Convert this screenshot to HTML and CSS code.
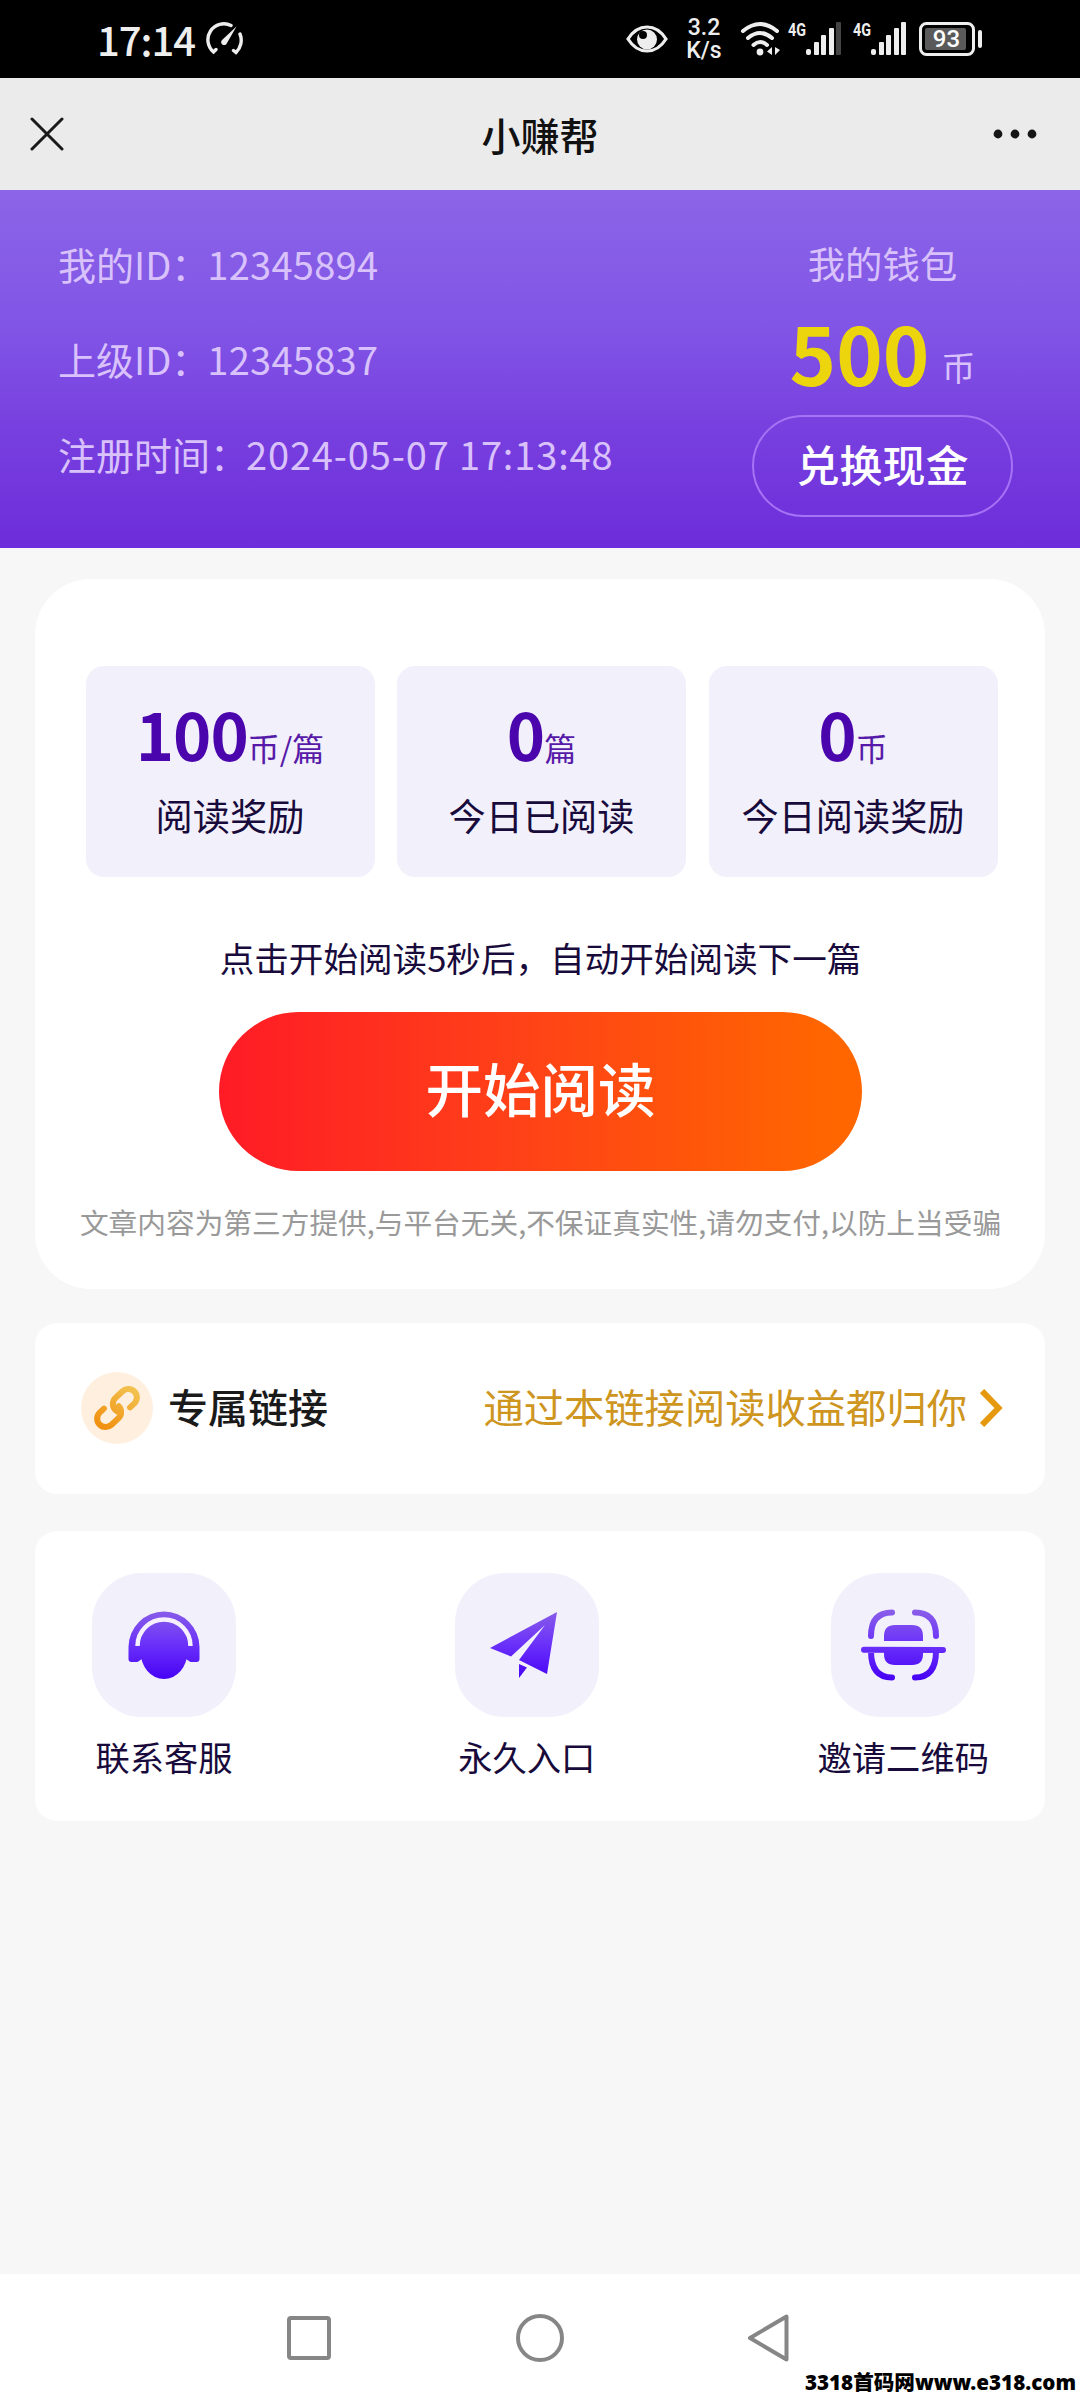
FILE: index.html
```html
<!DOCTYPE html>
<html lang="zh-CN">
<head>
<meta charset="utf-8">
<title>小赚帮</title>
<link rel="stylesheet" href="styles.css">
</head>
<body>
<div class="screen">
  <header class="status">
    <span class="clock">17:14</span>
    <svg class="gauge" width="38" height="34" viewBox="0 0 38 34" fill="none" stroke="#eee" stroke-width="3.4" stroke-linecap="round">
      <path d="M25 3.5A16 16 0 0 0 7.500 30L10 27.500M34 12A17 17 0 0 1 30 30.500L27.500 28.500"/>
      <path d="M30.500 4.500L16 18a3 3 0 1 0 5 3z" fill="#eee" stroke="none"/>
    </svg>
    <div class="status-right">
      <svg class="eye" width="42" height="28" viewBox="0 0 42 28">
        <path d="M2 14C12-2 30-2 40 14C30 30 12 30 2 14Z" fill="none" stroke="#eee" stroke-width="3.200"/>
        <circle cx="21" cy="14.500" r="10" fill="#eee"/><circle cx="17" cy="10" r="4" fill="#000"/>
      </svg>
      <span class="speed">3.2<br>K/s</span>
      <svg class="wifi" width="42" height="36" viewBox="0 0 42 36" fill="none" stroke="#eee" stroke-width="4" stroke-linecap="round">
        <path d="M3 10Q20-4 37 10M8 17Q20 7 32 17M13.500 24Q20 18 27 24"/>
        <circle cx="20" cy="31" r="3.400" fill="#eee" stroke="none"/>
        <path d="M32 26v8l-5-3.500zM35 26v8l5-5z" fill="#eee" stroke="none"/>
      </svg>
      <svg class="signal" width="54" height="36" viewBox="0 0 54 36" fill="#eee">
        <text class="net" x="0" y="15" textLength="18" lengthAdjust="spacingAndGlyphs">4G</text>
        <rect x="18" y="28" width="5" height="6" rx="2"/><rect x="26" y="21" width="5" height="13" rx="1"/><rect x="33" y="14" width="5" height="20" rx="1"/><rect x="41" y="7" width="5" height="27" rx="1"/><rect x="48" y="1" width="5" height="33" rx="1" fill="#444"/>
      </svg>
      <svg class="signal" width="54" height="36" viewBox="0 0 54 36" fill="#eee">
        <text class="net" x="0" y="15" textLength="18" lengthAdjust="spacingAndGlyphs">4G</text>
        <rect x="18" y="28" width="5" height="6" rx="2"/><rect x="26" y="21" width="5" height="13" rx="1"/><rect x="33" y="14" width="5" height="20" rx="1"/><rect x="41" y="7" width="5" height="27" rx="1"/><rect x="48" y="1" width="5" height="33" rx="1"/>
      </svg>
      <svg class="battery" width="64" height="34" viewBox="0 0 64 34">
        <rect x="1.500" y="1.500" width="53" height="31" rx="6" fill="none" stroke="#eee" stroke-width="3"/>
        <rect x="6" y="6" width="41" height="22" rx="2" fill="#5a5a5a"/>
        <rect x="59" y="8" width="4" height="18" rx="2" fill="#eee"/>
        <text class="pct" x="27.500" y="25" text-anchor="middle">93</text>
      </svg>
    </div>
  </header>

  <nav class="titlebar">
    <svg width="34" height="34" viewBox="0 0 34 34" stroke="#1a1a1a" stroke-width="3" stroke-linecap="round"><path d="M2 2L32 32M32 2L2 32"/></svg>
    <h1>小赚帮</h1>
    <svg width="44" height="10" viewBox="0 0 44 10" fill="#161616"><circle cx="5" cy="5" r="4.400"/><circle cx="22" cy="5" r="4.400"/><circle cx="39" cy="5" r="4.400"/></svg>
  </nav>

  <section class="account">
    <div class="facts">
      <p>我的ID：<span class="id">12345894</span></p>
      <p>上级ID：<span class="id">12345837</span></p>
      <p>注册时间：<span class="date">2024-05-07 17:13:48</span></p>
    </div>
    <div class="wallet">
      <p class="wallet-label">我的钱包</p>
      <p class="balance"><b>500</b><span>币</span></p>
      <button class="cash">兑换现金</button>
    </div>
  </section>

  <main class="content">
    <section class="card reading">
      <div class="stats">
        <div class="stat"><p class="value"><b>100</b>币/篇</p><p class="name">阅读奖励</p></div>
        <div class="stat"><p class="value"><b>0</b>篇</p><p class="name">今日已阅读</p></div>
        <div class="stat"><p class="value"><b>0</b>币</p><p class="name">今日阅读奖励</p></div>
      </div>
      <p class="hint">点击开始阅读5秒后，自动开始阅读下一篇</p>
      <button class="start">开始阅读</button>
      <p class="notice">文章内容为第三方提供,与平台无关,不保证真实性,请勿支付,以防上当受骗</p>
    </section>

    <section class="card link">
      <svg class="chain" width="72" height="72" viewBox="0 0 72 72" fill="none">
        <defs><linearGradient id="gold" gradientUnits="userSpaceOnUse" x1="60" y1="30" x2="12" y2="42"><stop offset="0" stop-color="#f3c14e"/><stop offset="1" stop-color="#f09010"/></linearGradient></defs>
        <circle cx="36" cy="36" r="36" fill="#feefdf"/>
        <g transform="rotate(-43 36 36)" stroke="url(#gold)" stroke-width="6" stroke-linecap="round" stroke-linejoin="round">
          <path d="M46 44.500H51.500a8.500 8.500 0 0 0 0-17H42a8.500 8.500 0 0 0-8.500 8.500q0 3 1.500 5"/>
          <path d="M26 27.500H20.500a8.500 8.500 0 0 0 0 17H30a8.500 8.500 0 0 0 8.500-8.500"/>
        </g>
      </svg>
      <span class="link-name">专属链接</span>
      <span class="link-text">通过本链接阅读收益都归你</span>
      <svg class="chevron" width="23" height="38" viewBox="0 0 23 38" fill="none" stroke="#e49a0c" stroke-width="6"><path d="M2 2L18.500 19L2 36"/></svg>
    </section>

    <section class="card tools">
      <div class="tool">
        <svg width="144" height="144" viewBox="0 0 144 144">
          <defs><linearGradient id="violet" gradientUnits="userSpaceOnUse" x1="0" y1="36" x2="0" y2="108"><stop offset="0" stop-color="#8a5fe8"/><stop offset=".5" stop-color="#6a30fa"/><stop offset="1" stop-color="#4500f5"/></linearGradient></defs>
          <rect width="144" height="144" rx="50" fill="#f2f0fb"/>
          <path d="M36.500 86V74a35.500 35.500 0 0 1 71 0V86a3 3 0 0 1-3 3h-6L94 86A23.500 27 0 0 1 50 86L45.500 89H39.500a3 3 0 0 1-3-3Z" fill="url(#violet)"/>
          <path d="M45.500 73a26.500 26.500 0 0 1 53 0" fill="none" stroke="#f6efff" stroke-width="4.500"/>
          <ellipse cx="72" cy="78.500" rx="23.500" ry="27.500" fill="url(#violet)"/>
        </svg>
        <span>联系客服</span>
      </div>
      <div class="tool">
        <svg width="144" height="144" viewBox="0 0 144 144">
          <rect width="144" height="144" rx="50" fill="#f2f0fb"/>
          <path d="M102 39L35 75L56 83.500L90 52L64 87L92 101ZM64 91L72 94.500L64 105Z" fill="url(#violet)"/>
        </svg>
        <span>永久入口</span>
      </div>
      <div class="tool">
        <svg width="144" height="144" viewBox="0 0 144 144">
          <rect width="144" height="144" rx="50" fill="#f2f0fb"/>
          <path d="M53 68V63Q53 52 64 52H81Q92 52 92 63V68ZM53 77H92V81Q92 92 81 92H64Q53 92 53 81Z" fill="url(#violet)"/>
          <path d="M61 39.500Q40 39.500 40 63M84 39.500Q105 39.500 105 63M33 76.800L112 77M40 78Q40 104.500 61 104.500M105 78Q105 104.500 84 104.500" fill="none" stroke="url(#violet)" stroke-width="6" stroke-linecap="round"/>
        </svg>
        <span>邀请二维码</span>
      </div>
    </section>
  </main>

  <footer class="system">
    <svg width="44" height="44" viewBox="0 0 44 44"><rect x="2" y="2" width="40" height="40" rx="2"/></svg>
    <svg width="48" height="48" viewBox="0 0 48 48"><circle cx="24" cy="24" r="22"/></svg>
    <svg width="42" height="50" viewBox="0 0 42 50"><path d="M39.500 3.500V46.500L3 25Z"/></svg>
    <span class="sitemark">3318首码网www.e318.com</span>
  </footer>
</div>
</body>
</html>
```
FILE: styles.css
```css
* { box-sizing: border-box; margin: 0; padding: 0; }
body { font-family: "Noto Sans CJK SC", sans-serif; color: #180b3c; }
svg { display: block; flex: none; }
button { font: inherit; border: 0; background: none; color: #fff; }
.screen { width: 1080px; height: 2400px; display: flex; flex-direction: column; background: #f7f7f7; overflow: hidden; }

.status { height: 78px; background: #000; color: #eee; display: flex; align-items: center; padding: 0 97px; }
.clock { font-size: 40px; line-height: 78px; font-weight: 500; letter-spacing: -1px; }
.gauge { margin-left: 11px; }
.status-right { margin-left: auto; display: flex; align-items: center; }
.speed { width: 38px; margin-left: 17px; font: 500 23px/23px Roboto, sans-serif; text-align: center; white-space: nowrap; }
.wifi { margin-left: 17px; }
.signal { margin-left: 6px; overflow: visible; }
.signal + .signal { margin-left: 11px; }
.battery { margin-left: 12px; }
.net { font: 700 18px Roboto, sans-serif; }
.pct { font: 500 24px Roboto, sans-serif; fill: #fff; }

.titlebar { height: 112px; background: #ebebeb; display: grid; grid-template-columns: 1fr auto 1fr; align-items: center; padding: 0 43px; }
.titlebar svg:first-child { margin-left: -13px; }
.titlebar svg:last-child { justify-self: end; }
.titlebar h1 { font-size: 39px; font-weight: 500; line-height: 56px; color: #111; }

.account { height: 358px; display: flex; justify-content: space-between; padding: 26px 67px 0 58px; background: linear-gradient(#8b64e7, #8155e6 38%, #7840df 66%, #6d2dda); color: #d9c2fb; }
.facts p { font-size: 38px; line-height: 95px; white-space: nowrap; }
.id { margin-left: -2px; letter-spacing: .3px; }
.date { margin-left: -2px; letter-spacing: .85px; }
.wallet { width: 261px; display: flex; flex-direction: column; align-items: center; }
.wallet-label { font-size: 37.400px; line-height: 95px; margin-bottom: -2px; }
.balance { height: 106px; display: flex; align-items: baseline; gap: 12px; line-height: 86px; font-size: 34px; }
.balance b { font-size: 79px; color: #ecd50c; }
.balance span { position: relative; top: -5px; }
.cash { width: 261px; height: 102px; border: 2px solid #a673f5; border-radius: 51px; font-size: 43px; font-weight: 500; line-height: 90px; padding-bottom: 6px; }

.content { flex: 1; padding: 31px 35px 0; display: flex; flex-direction: column; }
.card { background: #fff; border-radius: 22px; }
.reading { height: 710px; border-radius: 56px; padding: 87px 48px 0 49px; display: flex; flex-direction: column; align-items: center; }
.stats { width: 912px; display: grid; grid-template-columns: repeat(3, 289px); justify-content: space-between; position: relative; left: 1px; }
.stat { height: 211px; border-radius: 18px; background: #f2f0fb; text-align: center; padding-top: 19px; }
.value { font-size: 32px; line-height: 96px; height: 98px; color: #571aa8; white-space: nowrap; }
.value b { font-size: 65px; color: #4a05ad; letter-spacing: -1px; }
.name { font-size: 37.200px; line-height: 64px; white-space: nowrap; }
.hint { margin-top: 46px; font-size: 34.600px; line-height: 68px; white-space: nowrap; }
.start { margin-top: 21px; width: 643px; height: 159px; flex: none; border-radius: 80px; background: linear-gradient(90deg, #ff1b26, #ff4018 45%, #ff6600 95%); font-size: 57.500px; font-weight: 500; line-height: 150px; padding-bottom: 9px; }
.notice { margin-top: 21px; font-size: 28.700px; line-height: 60px; color: #999; white-space: nowrap; }

.link { margin-top: 34px; height: 171px; padding: 0 42px 2px 46px; display: flex; align-items: center; }
.link-name { margin: -3px 0 0 15px; font-size: 40px; font-weight: 500; line-height: 60px; color: #1a1a1a; }
.link-text { margin: -3px 0 0 auto; font-size: 40.300px; line-height: 60px; color: #ce951f; white-space: nowrap; }
.chevron { margin-left: 13px; }

.tools { margin-top: 37px; height: 290px; padding: 42px 56px 0 57px; display: flex; justify-content: space-between; }
.tool { display: flex; flex-direction: column; align-items: center; font-size: 34.300px; line-height: 50px; gap: 14px; white-space: nowrap; }

.system { position: relative; height: 126px; background: #fff; display: flex; align-items: center; padding: 2px 0 0 287px; }
.system svg { fill: none; stroke: #868686; stroke-width: 4; stroke-linejoin: round; }
.system svg + svg { margin-left: 185px; }
.system svg:nth-of-type(3) { margin-left: 183px; }
.sitemark { position: absolute; right: 4px; bottom: 1px; font: 900 20.600px/34px "Noto Sans", "Noto Sans CJK SC", sans-serif; color: #000; white-space: nowrap; text-shadow: 0 0 2px #fff; }
```
